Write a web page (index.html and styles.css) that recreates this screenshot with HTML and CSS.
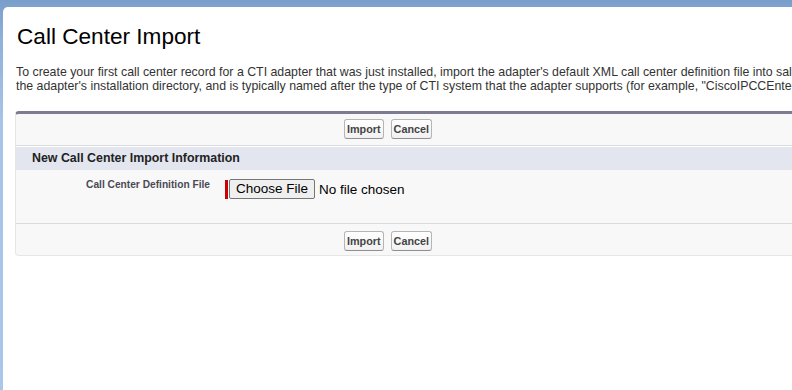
FILE: index.html
```html
<!DOCTYPE html>
<html lang="en">
<head>
<meta charset="utf-8">
<title>Call Center Import</title>
<link rel="stylesheet" href="styles.css">
</head>
<body>
<div class="panel">
  <h1 class="title">Call Center Import</h1>
  <p class="intro">To create your first call center record for a CTI adapter that was just installed, import the adapter's default XML call center definition file into salesforce.com. This file is located in<br>the adapter's installation directory, and is typically named after the type of CTI system that the adapter supports (for example, "CiscoIPCCEnterprise7x.xml").</p>
  <div class="block">
    <div class="btn-row">
      <button class="btn">Import</button>
      <button class="btn">Cancel</button>
    </div>
    <div class="subheader"><h3>New Call Center Import Information</h3></div>
    <div class="field-row">
      <label class="field-label">Call Center Definition File</label>
      <div class="field-value">
        <span class="required"></span>
        <span class="file-btn">Choose File</span>
        <span class="file-text">No file chosen</span>
      </div>
    </div>
    <div class="btn-row btn-row-bottom">
      <button class="btn">Import</button>
      <button class="btn">Cancel</button>
    </div>
  </div>
</div>
</body>
</html>
```

FILE: styles.css
```css
html, body {
  margin: 0;
  padding: 0;
  height: 100%;
  overflow: hidden;
}
body {
  background: linear-gradient(180deg, #7a9ecb 0px, #8fb1da 40px, #a6c4e6 120px, #a9c7e8 390px);
  font-family: "Liberation Sans", Arial, sans-serif;
  padding: 7px 0 0 3px;
  box-sizing: border-box;
}
.panel {
  background: #fff;
  width: 1100px;
  height: 400px;
  border-top-left-radius: 5px;
  padding: 0 0 0 12px;
  box-sizing: border-box;
}
.title {
  margin: 0;
  padding: 16px 0 0 2px;
  font-weight: normal;
  font-size: 22.6px;
  line-height: 27px;
  color: #000;
}
.intro {
  margin: 15px 0 0 1px;
  font-size: 12.35px;
  line-height: 14px;
  color: #333;
  white-space: nowrap;
}
.block {
  margin-top: 18px;
  width: 1000px;
  background: #f8f8f8;
  border: 1px solid #e6e6e6;
  border-top: 3px solid #7d7b92;
  border-radius: 4px;
  box-sizing: border-box;
}
.btn-row {
  display: flex;
  align-items: flex-start;
  gap: 7px;
  padding: 5px 0 6px 328px;
  border-bottom: 1px solid #dbdbdb;
}
.btn-row-bottom {
  border-bottom: none;
  border-top: 1px solid #dbdbdb;
  padding-top: 7px;
  padding-bottom: 4px;
}
.btn {
  font-family: "Liberation Sans", Arial, sans-serif;
  font-size: 10.8px;
  font-weight: bold;
  color: #444;
  background: linear-gradient(#ffffff, #f1f1f1);
  border: 1px solid #b5b5b5;
  border-bottom-color: #8f8f8f;
  border-radius: 3px;
  padding: 0 2px;
  height: 20px;
  line-height: 18px;
  margin: 0;
}
.subheader {
  background: #e3e6ef;
  border-top: 1px solid #fff;
  padding: 4px 0 5px 16px;
}
.subheader h3 {
  margin: 0;
  font-size: 12.4px;
  line-height: 14px;
  font-weight: bold;
  color: #222;
}
.field-row {
  display: flex;
  align-items: flex-start;
  height: 53px;
  padding-top: 9px;
  box-sizing: border-box;
}
.field-label {
  width: 194px;
  text-align: right;
  font-size: 10.2px;
  font-weight: bold;
  color: #4a4a56;
  padding-top: 0;
}
.field-value {
  display: flex;
  align-items: center;
  margin-left: 15px;
}
.required {
  width: 3px;
  height: 19px;
  background: #c00;
  margin-right: 1px;
}
.file-btn {
  font-size: 13.5px;
  color: #000;
  background: #efefef;
  border: 1px solid #767676;
  border-radius: 2px;
  padding: 1px 6px;
  line-height: 16px;
}
.file-text {
  font-size: 13.5px;
  color: #000;
  margin-left: 4px;
}
```
